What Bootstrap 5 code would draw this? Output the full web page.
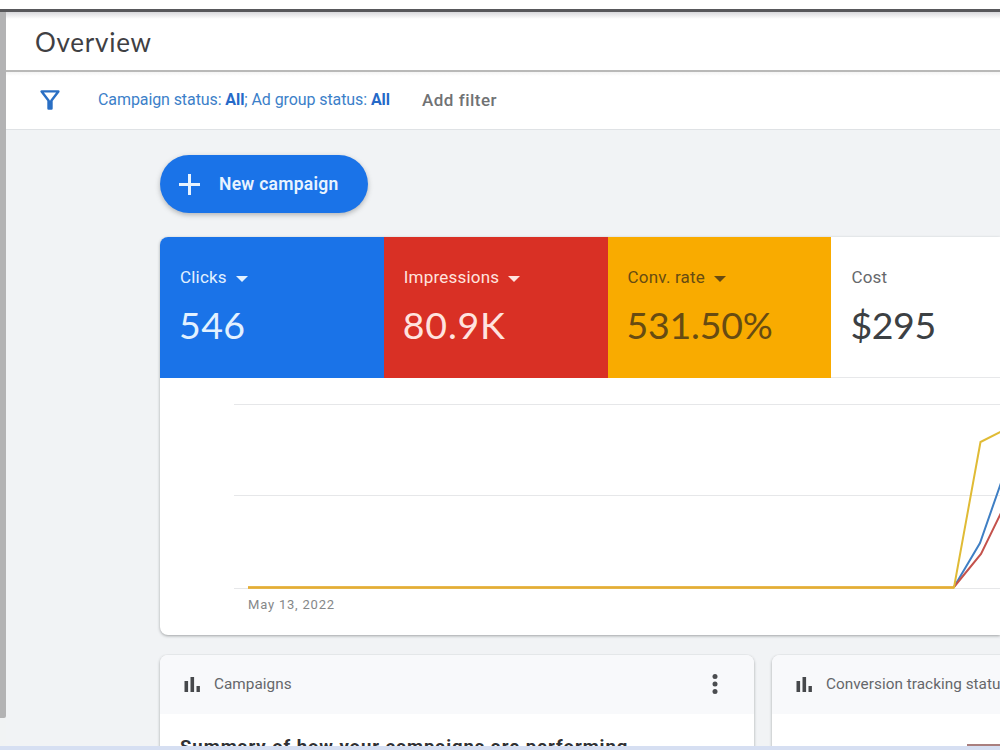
<!DOCTYPE html>
<html lang="en">
<head>
<meta charset="utf-8">
<meta name="viewport" content="width=device-width, initial-scale=1">
<title>Overview</title>
<link href="https://cdn.jsdelivr.net/npm/bootstrap@5.3.0/dist/css/bootstrap.min.css" rel="stylesheet">
<style>
html, body { height: 100%; overflow: hidden; }
body { font-family: Roboto, "Liberation Sans", sans-serif; background: #fff; color: #3c4043; }
.app { height: 750px; padding-top: 9px; }
.top-rule { height: 3px; background: #58585b; }
.rail { width: 6px; background: #f1f3f4; }
.rail-thumb { height: 706px; background: #b3b3b4; border-bottom-right-radius: 2px; }
.page { background: #f1f3f5; min-width: 0; }
.title-bar { height: 60px; padding: 1px 0 0 29px; background: linear-gradient(#d9d9dc, #fff 7px); border-bottom: 2px solid #b9b9b8; }
.title-bar h1 { font: 400 26px/1 Lato, sans-serif; letter-spacing: .75px; color: #3f4043; }
.filter-bar { height: 58px; background: linear-gradient(#f4f4f4, #fff 4px); border-bottom: 1px solid #dfe2e5; padding-left: 34px; padding-bottom: 2px; }
.filter-status { color: #3c7fc9; font-size: 16px; margin-left: 38px; width: 324px; letter-spacing: -.09px; }
.filter-status b { color: #2569c8; font-weight: 700; }
.filter-add { font-size: 17px; font-weight: 500; color: #707274; letter-spacing: .5px; padding-top: 2px; }
.content { padding: 25px 0 0 154px; }
.btn-new { width: 208px; height: 58px; background: #1a73e8; color: #e8f3ff; font-size: 17.5px; font-weight: 600; padding: 0 0 0 19px; box-shadow: 0 2px 5px rgba(60,64,67,.35); }
.btn-new:hover { background: #1a73e8; color: #fff; }
.btn-text { margin-left: 19px; letter-spacing: .27px; }
.panel { background: #fff; border-radius: 8px 0 0 8px; box-shadow: 0 1px 3px rgba(60,64,67,.45); height: 398px; margin-top: 24px; overflow: hidden; }
.metric { width: 223.8px; height: 141px; padding: 28px 0 0 20px; flex: none; }
.metric-name { font-size: 17px; line-height: 24px; letter-spacing: .2px; }
.metric-name svg { margin: 4px 0 0 9px; }
.metric-value { font: 400 37.5px/46px Lato, sans-serif; margin: 13px 0 0 -1px; white-space: nowrap; }
.m-blue { background: #1a73e8; color: #e2f1ff; }
.m-blue .metric-value { letter-spacing: .4px; }
.m-red { background: #d93025; color: #ffe3df; }
.m-red .metric-value { letter-spacing: .8px; }
.m-amber { background: #f9ab00; color: #674b12; }
.m-amber .metric-value { letter-spacing: -.25px; }
.m-plain { border-bottom: 1px solid #e7e8ea; }
.m-plain .metric-name { color: #66686b; }
.m-plain .metric-value { letter-spacing: -.4px; }
.chart-label { font-size: 13px; fill: #858789; letter-spacing: .8px; }
.tiles { margin-top: 19px; gap: 18px; height: 92px; overflow: hidden; padding: 1px 0 0 3px; margin-left: -3px; }
.tile { flex: none; width: 594px; background: #fff; height: 150px; border-radius: 8px; box-shadow: 0 1px 3px rgba(60,64,67,.45); overflow: hidden; }
.tile-head { height: 59px; background: #f8f9fb; padding: 0 35px 1px 24px; font-size: 15.3px; color: #65676a; }
.tile-head span { margin-left: 13px; letter-spacing: .04px; white-space: nowrap; padding-top: 1px; }
.tile-text { font: 700 18.5px/22px Roboto, sans-serif; padding: 22px 0 0 20px; color: #303134; letter-spacing: .95px; white-space: nowrap; }
.tile-accent { height: 3px; background: #a97f7e; margin: 30px 0 0 195px; }
.base-strip { height: 4px; background: #d6dff2; }
</style>
</head>
<body>
<div class="app d-flex flex-column overflow-hidden">
  <div class="top-rule flex-shrink-0"></div>
  <div class="d-flex flex-grow-1 overflow-hidden">
    <div class="rail flex-shrink-0"><div class="rail-thumb"></div></div>
    <main class="page flex-grow-1 overflow-hidden">
      <header class="title-bar d-flex align-items-center"><h1 class="m-0">Overview</h1></header>
      <div class="filter-bar d-flex align-items-center">
        <svg width="20" height="20" viewBox="0 0 20 20" fill="none" stroke="#2a6fc4" stroke-width="2.4" stroke-linejoin="round"><path d="M1.600 1.400h16.800L11.500 10.500v8H8.500v-8z"/><path d="M10 10.500v8" stroke-width="3"/></svg>
        <div class="filter-status text-nowrap">Campaign status: <b>All</b>; Ad group status: <b>All</b></div>
        <div class="filter-add text-nowrap">Add filter</div>
      </div>
      <div class="content">
        <button class="btn btn-new rounded-pill border-0 d-flex align-items-center">
          <svg width="21" height="21" viewBox="0 0 21 21" stroke="#e8f3ff" stroke-width="3"><path d="M0 10.500h21M10.500 0v21"/></svg>
          <span class="btn-text text-nowrap">New campaign</span>
        </button>
        <section class="panel">
          <div class="d-flex">
            <div class="metric m-blue"><div class="metric-name d-flex align-items-center">Clicks<svg width="12" height="6" viewBox="0 0 12 6" fill="currentColor"><path d="M0 0h12L6 6z"/></svg></div><div class="metric-value">546</div></div>
            <div class="metric m-red"><div class="metric-name d-flex align-items-center">Impressions<svg width="12" height="6" viewBox="0 0 12 6" fill="currentColor"><path d="M0 0h12L6 6z"/></svg></div><div class="metric-value">80.9K</div></div>
            <div class="metric m-amber"><div class="metric-name d-flex align-items-center">Conv. rate<svg width="12" height="6" viewBox="0 0 12 6" fill="currentColor"><path d="M0 0h12L6 6z"/></svg></div><div class="metric-value">531.50%</div></div>
            <div class="metric m-plain"><div class="metric-name">Cost</div><div class="metric-value">$295</div></div>
          </div>
          <svg class="d-block" width="840" height="257" viewBox="160 378 840 257" fill="none">
            <path d="M234 404.500H1000M234 495.500H1000M234 588.500H1000" stroke="#e6e7e9"/>
            <path d="M954 587L980 543L1002 480" stroke="#3f7fc4" stroke-width="2"/>
            <path d="M954 587L981 554L1002 511" stroke="#c4524c" stroke-width="2"/>
            <path d="M248 587.500H954L980.500 442L1002 431" stroke="#e0bb35" stroke-width="2"/>
            <path d="M248 587.500H954" stroke="#e5ac35" stroke-width="2.400"/>
            <text class="chart-label" x="248" y="608.500">May 13, 2022</text>
          </svg>
        </section>
        <div class="tiles d-flex">
          <section class="tile">
            <div class="tile-head d-flex align-items-center">
              <svg width="17" height="15" viewBox="0 0 17 15" fill="#46484b"><path d="M.5 4h3.600v11H.5zM6.500 0h3.600v15H6.500zM12.500 9h3.400v6h-3.400z"/></svg>
              <span>Campaigns</span>
              <svg class="ms-auto" width="8" height="20" viewBox="0 0 8 20" fill="#4b4d50"><circle cx="4" cy="2.600" r="2.500"/><circle cx="4" cy="10" r="2.500"/><circle cx="4" cy="17.400" r="2.500"/></svg>
            </div>
            <div class="tile-text">Summary of how your campaigns are performing</div>
          </section>
          <section class="tile">
            <div class="tile-head d-flex align-items-center">
              <svg width="17" height="15" viewBox="0 0 17 15" fill="#46484b"><path d="M.5 4h3.600v11H.5zM6.500 0h3.600v15H6.500zM12.500 9h3.400v6h-3.400z"/></svg>
              <span>Conversion tracking status</span>
            </div>
            <div class="tile-accent"></div>
          </section>
        </div>
      </div>
    </main>
  </div>
  <div class="base-strip flex-shrink-0"></div>
</div>
<script src="https://cdn.jsdelivr.net/npm/bootstrap@5.3.0/dist/js/bootstrap.bundle.min.js"></script>
</body>
</html>
